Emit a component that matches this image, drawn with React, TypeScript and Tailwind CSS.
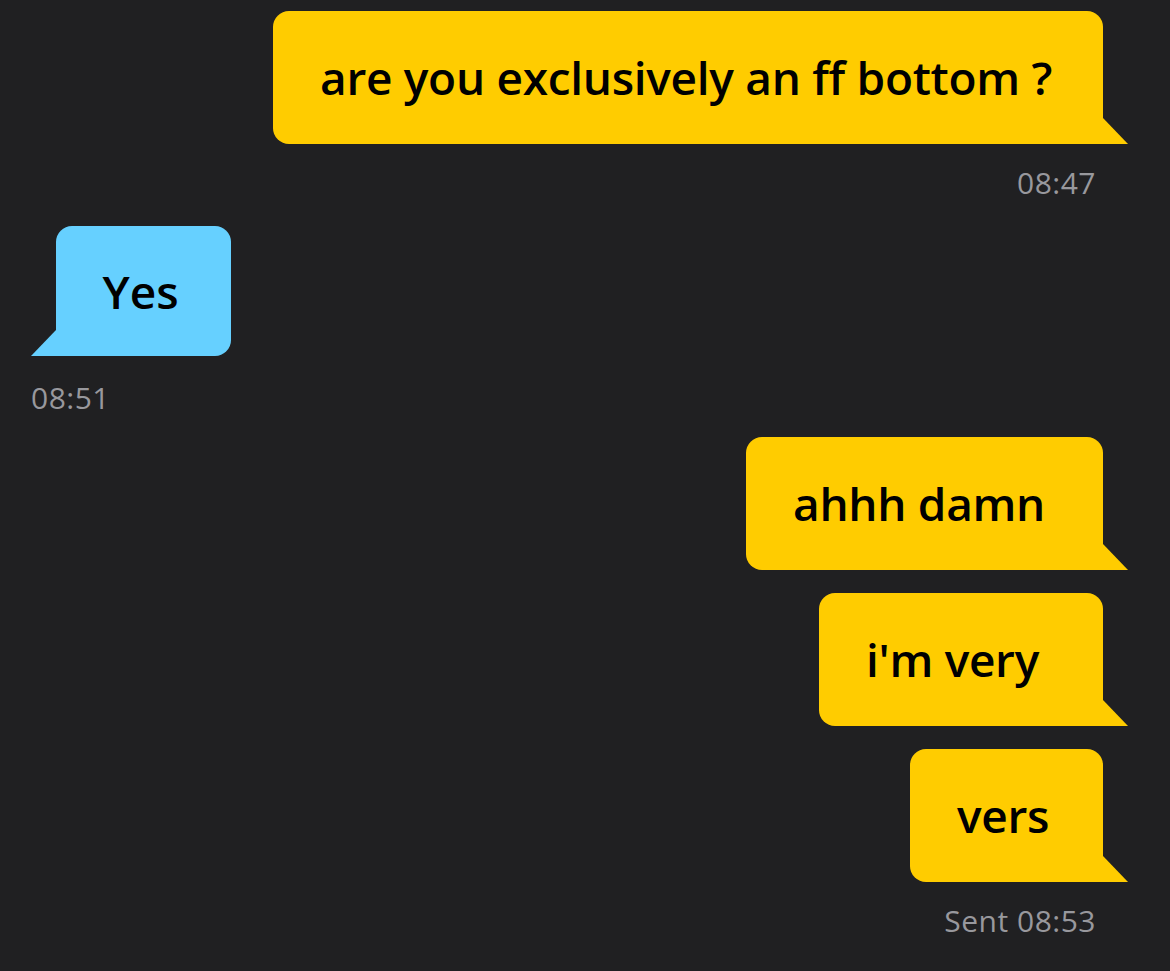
import React from 'react'

type Msg = { text: string; width: number }

const font = { fontFamily: '"Open Sans", "Noto Sans", sans-serif' }

const TailRight = () => (
    <svg className="absolute right-[-25px] bottom-0" width="25" height="26" viewBox="0 0 25 26">
        <polygon points="0,0 25,26 0,26" fill="#ffcc00" />
    </svg>
)

const TailLeft = () => (
    <svg className="absolute left-[-25px] bottom-0" width="25" height="26" viewBox="0 0 25 26">
        <polygon points="25,0 25,26 0,26" fill="#66d0ff" />
    </svg>
)

const Outgoing = ({ text, width }: Msg) => (
    <div className="flex justify-end pr-[67px]">
        <div
            className="relative h-[133px] flex items-center pl-[47px] rounded-[16px] rounded-br-none bg-[#ffcc00] text-black text-[46px] font-semibold tracking-[-0.3px]"
            style={{ width }}
        >
            <span className="whitespace-nowrap">{text}</span>
            <TailRight />
        </div>
    </div>
)

const Stamp = ({ children, right }: { children: React.ReactNode; right?: boolean }) => (
    <div className={right ? 'flex justify-end pr-[74px]' : 'flex pl-[31px]'}>
        <span className="text-[30px] text-[#98989d] leading-none tracking-[0.5px]">{children}</span>
    </div>
)

export default function App() {
    return (
        <div className="w-[1170px] h-[971px] bg-[#202022] overflow-hidden" style={font}>
            <div className="pt-[11px]">
                <Outgoing text="are you exclusively an ff bottom ?" width={830} />
            </div>
            <div className="mt-[24px]">
                <Stamp right>08:47</Stamp>
            </div>
            <div className="mt-[28px] flex pl-[56px]">
                <div className="relative w-[175px] h-[130px] flex items-center justify-center rounded-[16px] rounded-bl-none bg-[#66d0ff] text-black text-[46px] font-semibold">
                    <span className="pr-[6px]">Yes</span>
                    <TailLeft />
                </div>
            </div>
            <div className="mt-[27px]">
                <Stamp>08:51</Stamp>
            </div>
            <div className="mt-[24px] flex flex-col gap-[23px]">
                <Outgoing text="ahhh damn" width={357} />
                <Outgoing text="i'm very" width={284} />
                <Outgoing text="vers" width={193} />
            </div>
            <div className="mt-[24px]">
                <Stamp right>Sent 08:53</Stamp>
            </div>
        </div>
    )
}
